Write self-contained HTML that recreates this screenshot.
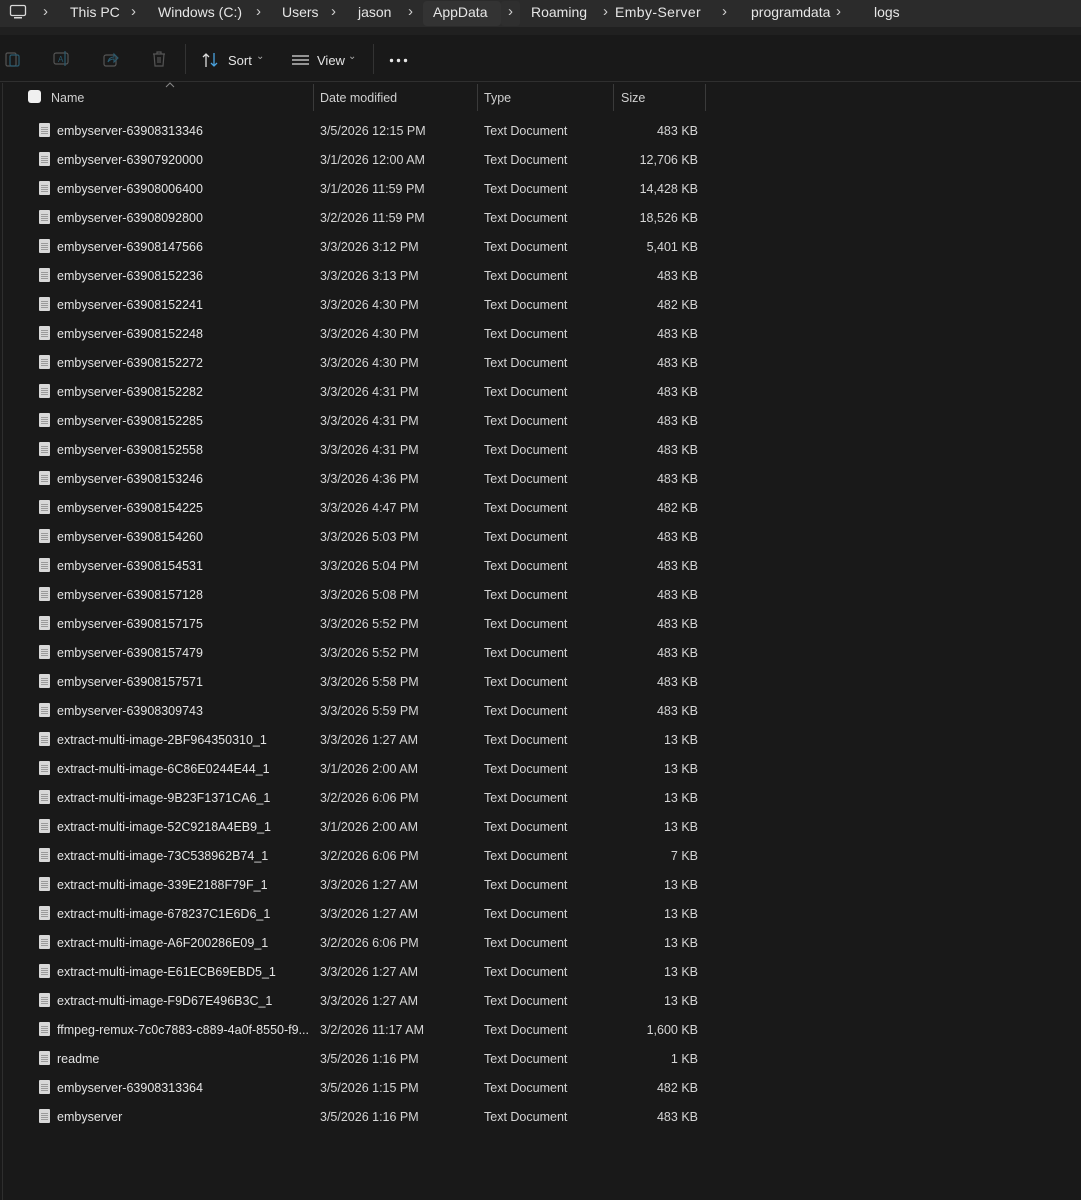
<!DOCTYPE html>
<html><head><meta charset="utf-8">
<style>
*{margin:0;padding:0;box-sizing:border-box}
body{width:1081px;height:1200px;background:#191919;font-family:"Liberation Sans",sans-serif;color:#e4e4e4;position:relative;overflow:hidden;font-size:12.5px}
.addr{position:absolute;left:0;top:0;width:1081px;height:27px;background:#2b2b2b}
.gap{position:absolute;left:0;top:27px;width:1081px;height:8px;background:#202020}
.a{position:absolute;top:4px;font-size:14px;color:#e6e6e6}
.chev{position:absolute;top:3px;font-size:15px;color:#cfcfcf}
.tb{position:absolute;top:35px;left:0;width:1081px;height:47px;border-bottom:1px solid #2f2f2f}
.hdr{position:absolute;top:91px;font-size:12.5px;color:#d0d0d0}
.sep{position:absolute;top:84px;width:1px;height:27px;background:#3a3a3a}
.r{position:absolute;left:0;width:1081px;height:29px}
.r span{position:absolute;top:7px;white-space:nowrap}
.ic{position:absolute;left:39px;top:6px;width:11px;height:14px;background:#d8d8d8;border-radius:1px}
.ic:after{content:"";position:absolute;left:2px;top:3px;width:7px;height:8px;background:repeating-linear-gradient(#d8d8d8 0 1px,#9a9a9a 1px 2px)}
.n{left:57px;color:#e4e4e4}.d{left:320px;color:#d6d6d6}.t{left:484px;color:#d6d6d6}.s{right:383px;color:#d6d6d6;text-align:right}
</style></head><body>
<div class="addr">
<svg style="position:absolute;left:9px;top:4px" width="18" height="16" viewBox="0 0 18 16"><rect x="1.5" y="1.5" width="15" height="10" rx="1.5" fill="none" stroke="#d8d8d8" stroke-width="1.3"/><rect x="5" y="13" width="8" height="1.5" fill="#d8d8d8"/></svg>
<span class="chev" style="left:43px">&#8250;</span>
<span class="a" style="left:70px">This PC</span>
<span class="chev" style="left:131px">&#8250;</span>
<span class="a" style="left:158px">Windows (C:)</span>
<span class="chev" style="left:256px">&#8250;</span>
<span class="a" style="left:282px">Users</span>
<span class="chev" style="left:331px">&#8250;</span>
<span class="a" style="left:358px">jason</span>
<span class="chev" style="left:408px">&#8250;</span>
<div style="position:absolute;left:423px;top:1px;width:78px;height:25px;background:#333;border-radius:4px"></div>
<div style="position:absolute;left:501px;top:1px;width:19px;height:25px;background:#2f2f2f;border-radius:3px"></div>
<span class="a" style="left:433px">AppData</span>
<span class="chev" style="left:508px">&#8250;</span>
<span class="a" style="left:531px">Roaming</span>
<span class="chev" style="left:603px">&#8250;</span>
<span class="a" style="left:615px;letter-spacing:0.4px">Emby-Server</span>
<span class="chev" style="left:722px">&#8250;</span>
<span class="a" style="left:751px">programdata</span>
<span class="chev" style="left:836px">&#8250;</span>
<span class="a" style="left:874px">logs</span>
</div>
<div class="gap"></div>
<div class="tb">
<svg style="position:absolute;left:5px;top:15px" width="16" height="18"><rect x="1" y="3" width="10" height="13" rx="1.5" fill="none" stroke="#555" stroke-width="1.2"/><rect x="5" y="5" width="9" height="11" rx="1.5" fill="none" stroke="#2a5a6e" stroke-width="1.2"/></svg>
<svg style="position:absolute;left:53px;top:16px" width="18" height="16"><rect x="1" y="2" width="14" height="11" rx="2" fill="none" stroke="#555" stroke-width="1.2"/><text x="5" y="11" font-size="8" fill="#2a5a6e" font-family="Liberation Sans">A</text><line x1="12" y1="0" x2="12" y2="15" stroke="#2a5a6e" stroke-width="1.2"/></svg>
<svg style="position:absolute;left:103px;top:16px" width="17" height="16"><rect x="1" y="4" width="12" height="11" rx="2" fill="none" stroke="#555" stroke-width="1.2"/><path d="M5 11 Q6 6 11 6 V3 L15 7 L11 11 V8 Q7 8 5 11Z" fill="none" stroke="#2a5a6e" stroke-width="1.1"/></svg>
<svg style="position:absolute;left:151px;top:16px" width="16" height="17"><path d="M2 3 H14 M6 3 V1 H10 V3 M3 3 L4 15 H12 L13 3 M7 6 V12 M9 6 V12" fill="none" stroke="#555" stroke-width="1.2"/></svg>
<div style="position:absolute;left:185px;top:9px;width:1px;height:30px;background:#333"></div>
<svg style="position:absolute;left:202px;top:17px" width="18" height="16"><path d="M4 15 V2 M1 5 L4 2 L7 5" fill="none" stroke="#ddd" stroke-width="1.3"/><path d="M12 1 V14 M9 11 L12 14 L15 11" fill="none" stroke="#4aa3df" stroke-width="1.3"/></svg>
<span style="position:absolute;left:228px;top:18px;font-size:13px">Sort</span><span style="position:absolute;left:256px;top:16px;font-size:10px;color:#aaa">&#8964;</span>
<svg style="position:absolute;left:292px;top:20px" width="18" height="11"><path d="M0 1H17M0 5H17M0 9H17" stroke="#ddd" stroke-width="1.2"/></svg>
<span style="position:absolute;left:317px;top:18px;font-size:13px">View</span><span style="position:absolute;left:348px;top:16px;font-size:10px;color:#aaa">&#8964;</span>
<div style="position:absolute;left:373px;top:9px;width:1px;height:30px;background:#333"></div>
<svg style="position:absolute;left:389px;top:23px" width="20" height="5"><circle cx="2.5" cy="2.5" r="1.7" fill="#e6e6e6"/><circle cx="9.5" cy="2.5" r="1.7" fill="#e6e6e6"/><circle cx="16.5" cy="2.5" r="1.7" fill="#e6e6e6"/></svg>
</div>
<div style="position:absolute;left:2px;top:83px;width:1px;height:1117px;background:#2e2e2e"></div>
<div style="position:absolute;left:28px;top:90px;width:13px;height:13px;background:#f0f0f0;border-radius:3px"></div>
<svg style="position:absolute;left:165px;top:82px" width="10" height="6"><path d="M1 5 L5 1 L9 5" fill="none" stroke="#888" stroke-width="1"/></svg>
<span class="hdr" style="left:51px">Name</span>
<div class="sep" style="left:313px"></div>
<span class="hdr" style="left:320px">Date modified</span>
<div class="sep" style="left:477px"></div>
<span class="hdr" style="left:484px">Type</span>
<div class="sep" style="left:613px"></div>
<span class="hdr" style="left:621px">Size</span>
<div class="sep" style="left:705px"></div>
<div style="position:absolute;top:117px;left:0">
<div class="r" style="top:0"><i class="ic"></i><span class="n">embyserver-63908313346</span><span class="d">3/5/2026 12:15 PM</span><span class="t">Text Document</span><span class="s">483 KB</span></div>
<div class="r" style="top:29px"><i class="ic"></i><span class="n">embyserver-63907920000</span><span class="d">3/1/2026 12:00 AM</span><span class="t">Text Document</span><span class="s">12,706 KB</span></div>
<div class="r" style="top:58px"><i class="ic"></i><span class="n">embyserver-63908006400</span><span class="d">3/1/2026 11:59 PM</span><span class="t">Text Document</span><span class="s">14,428 KB</span></div>
<div class="r" style="top:87px"><i class="ic"></i><span class="n">embyserver-63908092800</span><span class="d">3/2/2026 11:59 PM</span><span class="t">Text Document</span><span class="s">18,526 KB</span></div>
<div class="r" style="top:116px"><i class="ic"></i><span class="n">embyserver-63908147566</span><span class="d">3/3/2026 3:12 PM</span><span class="t">Text Document</span><span class="s">5,401 KB</span></div>
<div class="r" style="top:145px"><i class="ic"></i><span class="n">embyserver-63908152236</span><span class="d">3/3/2026 3:13 PM</span><span class="t">Text Document</span><span class="s">483 KB</span></div>
<div class="r" style="top:174px"><i class="ic"></i><span class="n">embyserver-63908152241</span><span class="d">3/3/2026 4:30 PM</span><span class="t">Text Document</span><span class="s">482 KB</span></div>
<div class="r" style="top:203px"><i class="ic"></i><span class="n">embyserver-63908152248</span><span class="d">3/3/2026 4:30 PM</span><span class="t">Text Document</span><span class="s">483 KB</span></div>
<div class="r" style="top:232px"><i class="ic"></i><span class="n">embyserver-63908152272</span><span class="d">3/3/2026 4:30 PM</span><span class="t">Text Document</span><span class="s">483 KB</span></div>
<div class="r" style="top:261px"><i class="ic"></i><span class="n">embyserver-63908152282</span><span class="d">3/3/2026 4:31 PM</span><span class="t">Text Document</span><span class="s">483 KB</span></div>
<div class="r" style="top:290px"><i class="ic"></i><span class="n">embyserver-63908152285</span><span class="d">3/3/2026 4:31 PM</span><span class="t">Text Document</span><span class="s">483 KB</span></div>
<div class="r" style="top:319px"><i class="ic"></i><span class="n">embyserver-63908152558</span><span class="d">3/3/2026 4:31 PM</span><span class="t">Text Document</span><span class="s">483 KB</span></div>
<div class="r" style="top:348px"><i class="ic"></i><span class="n">embyserver-63908153246</span><span class="d">3/3/2026 4:36 PM</span><span class="t">Text Document</span><span class="s">483 KB</span></div>
<div class="r" style="top:377px"><i class="ic"></i><span class="n">embyserver-63908154225</span><span class="d">3/3/2026 4:47 PM</span><span class="t">Text Document</span><span class="s">482 KB</span></div>
<div class="r" style="top:406px"><i class="ic"></i><span class="n">embyserver-63908154260</span><span class="d">3/3/2026 5:03 PM</span><span class="t">Text Document</span><span class="s">483 KB</span></div>
<div class="r" style="top:435px"><i class="ic"></i><span class="n">embyserver-63908154531</span><span class="d">3/3/2026 5:04 PM</span><span class="t">Text Document</span><span class="s">483 KB</span></div>
<div class="r" style="top:464px"><i class="ic"></i><span class="n">embyserver-63908157128</span><span class="d">3/3/2026 5:08 PM</span><span class="t">Text Document</span><span class="s">483 KB</span></div>
<div class="r" style="top:493px"><i class="ic"></i><span class="n">embyserver-63908157175</span><span class="d">3/3/2026 5:52 PM</span><span class="t">Text Document</span><span class="s">483 KB</span></div>
<div class="r" style="top:522px"><i class="ic"></i><span class="n">embyserver-63908157479</span><span class="d">3/3/2026 5:52 PM</span><span class="t">Text Document</span><span class="s">483 KB</span></div>
<div class="r" style="top:551px"><i class="ic"></i><span class="n">embyserver-63908157571</span><span class="d">3/3/2026 5:58 PM</span><span class="t">Text Document</span><span class="s">483 KB</span></div>
<div class="r" style="top:580px"><i class="ic"></i><span class="n">embyserver-63908309743</span><span class="d">3/3/2026 5:59 PM</span><span class="t">Text Document</span><span class="s">483 KB</span></div>
<div class="r" style="top:609px"><i class="ic"></i><span class="n">extract-multi-image-2BF964350310_1</span><span class="d">3/3/2026 1:27 AM</span><span class="t">Text Document</span><span class="s">13 KB</span></div>
<div class="r" style="top:638px"><i class="ic"></i><span class="n">extract-multi-image-6C86E0244E44_1</span><span class="d">3/1/2026 2:00 AM</span><span class="t">Text Document</span><span class="s">13 KB</span></div>
<div class="r" style="top:667px"><i class="ic"></i><span class="n">extract-multi-image-9B23F1371CA6_1</span><span class="d">3/2/2026 6:06 PM</span><span class="t">Text Document</span><span class="s">13 KB</span></div>
<div class="r" style="top:696px"><i class="ic"></i><span class="n">extract-multi-image-52C9218A4EB9_1</span><span class="d">3/1/2026 2:00 AM</span><span class="t">Text Document</span><span class="s">13 KB</span></div>
<div class="r" style="top:725px"><i class="ic"></i><span class="n">extract-multi-image-73C538962B74_1</span><span class="d">3/2/2026 6:06 PM</span><span class="t">Text Document</span><span class="s">7 KB</span></div>
<div class="r" style="top:754px"><i class="ic"></i><span class="n">extract-multi-image-339E2188F79F_1</span><span class="d">3/3/2026 1:27 AM</span><span class="t">Text Document</span><span class="s">13 KB</span></div>
<div class="r" style="top:783px"><i class="ic"></i><span class="n">extract-multi-image-678237C1E6D6_1</span><span class="d">3/3/2026 1:27 AM</span><span class="t">Text Document</span><span class="s">13 KB</span></div>
<div class="r" style="top:812px"><i class="ic"></i><span class="n">extract-multi-image-A6F200286E09_1</span><span class="d">3/2/2026 6:06 PM</span><span class="t">Text Document</span><span class="s">13 KB</span></div>
<div class="r" style="top:841px"><i class="ic"></i><span class="n">extract-multi-image-E61ECB69EBD5_1</span><span class="d">3/3/2026 1:27 AM</span><span class="t">Text Document</span><span class="s">13 KB</span></div>
<div class="r" style="top:870px"><i class="ic"></i><span class="n">extract-multi-image-F9D67E496B3C_1</span><span class="d">3/3/2026 1:27 AM</span><span class="t">Text Document</span><span class="s">13 KB</span></div>
<div class="r" style="top:899px"><i class="ic"></i><span class="n">ffmpeg-remux-7c0c7883-c889-4a0f-8550-f9...</span><span class="d">3/2/2026 11:17 AM</span><span class="t">Text Document</span><span class="s">1,600 KB</span></div>
<div class="r" style="top:928px"><i class="ic"></i><span class="n">readme</span><span class="d">3/5/2026 1:16 PM</span><span class="t">Text Document</span><span class="s">1 KB</span></div>
<div class="r" style="top:957px"><i class="ic"></i><span class="n">embyserver-63908313364</span><span class="d">3/5/2026 1:15 PM</span><span class="t">Text Document</span><span class="s">482 KB</span></div>
<div class="r" style="top:986px"><i class="ic"></i><span class="n">embyserver</span><span class="d">3/5/2026 1:16 PM</span><span class="t">Text Document</span><span class="s">483 KB</span></div>
</div>
</body></html>
